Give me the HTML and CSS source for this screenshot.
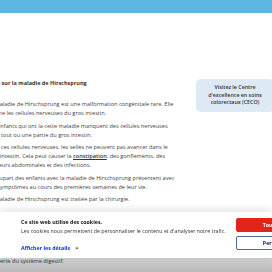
FILE: index.html
```html
<!DOCTYPE html>
<html lang="fr">

<head>
    <meta charset="UTF-8">
    <meta name="viewport" content="width=device-width, initial-scale=1.0">
    <title>Maladie de Hirschsprung</title>
    <link rel="stylesheet" href="styles.css">
</head>

<body>

    <header class="topbar"></header>

    <div class="page">
        <main class="content">
            <h2>Faits sur la maladie de Hirschsprung</h2>
            <p>La maladie de Hirschsprung est une malformation congénitale rare. Elle touche les cellules nerveuses du gros intestin.</p>
            <p>Les enfants qui ont la cette maladie manquent des cellules nerveuses dans tout ou une partie du gros intestin.</p>
            <p>Sans ces cellules nerveuses, les selles ne peuvent pas avancer dans le gros intestin. Cela peut causer la <a href="#">constipation</a>, des gonflements, des douleurs abdominales et des infections.</p>
            <p>La plupart des enfants avec la maladie de Hirschsprung présentent avec des symptômes au cours des premières semaines de leur vie.</p>
            <p>La maladie de Hirschsprung est traitée par la chirurgie.</p>
        </main>

        <aside class="promo">
            <a href="#">Visitez le Centre d'excellence en soins colorectaux (CECO)</a>
        </aside>
    </div>

    <section class="lower">
        <p>Alerte du système digestif.</p>
    </section>

    <div class="cookie-banner">
        <div class="cookie-text">
            <h3>Ce site web utilise des cookies.</h3>
            <p>Les cookies nous permettent de personnaliser le contenu et d'analyser notre trafic.</p>
            <a class="cookie-details" href="#">Afficher les détails <span class="chevron">&gt;</span></a>
        </div>
        <div class="cookie-actions">
            <button class="btn-accept">Tout accepter</button>
            <button class="btn-custom">Personnaliser</button>
        </div>
    </div>

</body>

</html>
```

FILE: styles.css
```css
* {
    box-sizing: border-box;
}

html, body {
    overflow: hidden;
}

body {
    margin: 0;
    background: #ffffff;
    color: #444444;
    font-family: "Open Sans", "Noto Sans", sans-serif;
    font-size: 5.6px;
    line-height: 8.8px;
}

.topbar {
    height: 13px;
    background-color: #5bb6e1;
}

.page {
    display: flex;
    gap: 16px;
    margin: 66px 0 0 -13px;
}

.content {
    flex: none;
    width: 193px;
}

.content h2 {
    margin: 0 0 12.5px;
    font-size: 5.5px;
    line-height: 8.8px;
    font-weight: 700;
    color: #333333;
}

.content p {
    margin: 0 0 4px;
}

.content a {
    color: #333333;
    font-weight: 600;
    text-decoration: underline;
}

.promo {
    flex: none;
    align-self: flex-start;
    width: 78px;
    padding: 5px 6px 5px;
    border-radius: 5px;
    background-color: #dde9f5;
    text-align: center;
    font-size: 5.3px;
    line-height: 7.5px;
}

.promo a {
    color: #333333;
    font-weight: 600;
    text-decoration: none;
}

.lower {
    margin-top: 8px;
    height: 60px;
    padding: 41px 0 0 0;
    background: linear-gradient(#d0d0d0, #cdcdcd 44px, #b4b4b4);
}

.lower p {
    margin: 0 0 0 -5px;
    color: #333333;
}

.cookie-banner {
    position: fixed;
    left: 0;
    right: 0;
    bottom: 14px;
    height: 46px;
    display: flex;
    padding: 6px 0 0 21px;
    background: #ffffff;
    box-shadow: 0 -2px 8px rgba(0, 0, 0, 0.12);
    font-size: 5.3px;
    line-height: 9px;
}

.cookie-text {
    flex: none;
    width: 215px;
}

.cookie-text h3 {
    margin: 0;
    font-size: 5.3px;
    line-height: 9px;
    font-weight: 700;
    color: #141414;
}

.cookie-text p {
    margin: 0;
    color: #333333;
}

.cookie-details {
    display: inline-block;
    margin-top: 8px;
    color: #1032cf;
    font-weight: 700;
    text-decoration: none;
}

.chevron {
    margin-left: 4px;
    color: #141414;
}

.cookie-actions {
    flex: none;
    width: 90px;
    display: flex;
    flex-direction: column;
    gap: 4px;
}

.cookie-actions button {
    height: 14px;
    padding: 0;
    border-radius: 2px;
    font-family: inherit;
    font-size: 5.3px;
    font-weight: 700;
}

.btn-accept {
    border: 1px solid #e1251b;
    background-color: #e1251b;
    color: #ffffff;
}

.btn-custom {
    border: 1px solid #51649b;
    background-color: #ffffff;
    color: #141c4f;
}
```
